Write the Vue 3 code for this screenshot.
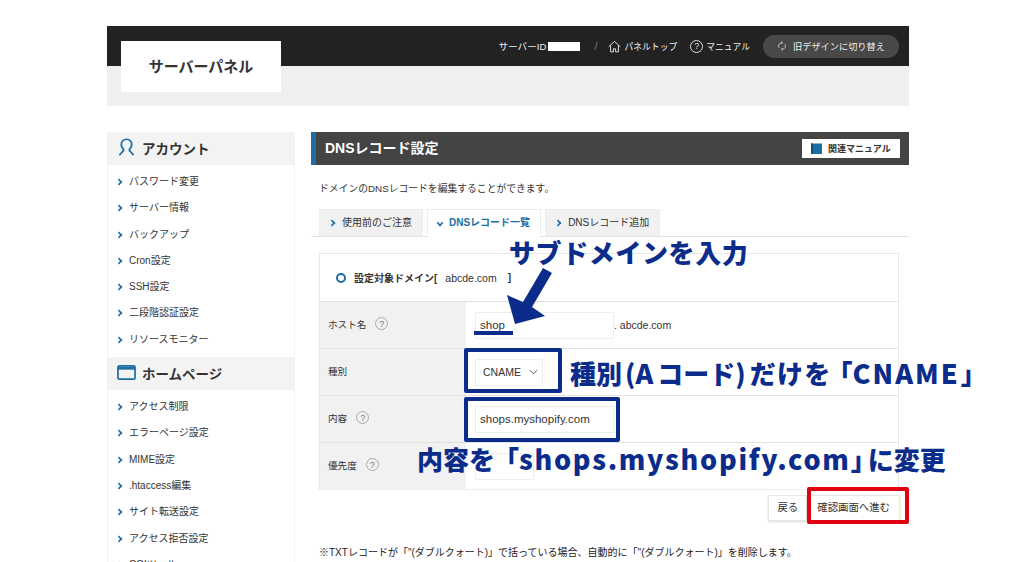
<template>
  <div class="page">
    <div class="wrap">
      <header class="header">
        <div class="topbar">
          <div class="logo">サーバーパネル</div>
          <div class="top-nav">
            <span class="server-id">サーバーID<i class="masked"></i></span>
            <span class="slash">/</span>
            <span class="nav-link">
              <svg class="ico home" viewBox="0 0 14 14"><path d="M.8 7.200 7 1.500l6.200 5.700M2.800 5.800v7h3V9.500h2.400v3.300h3v-7" /></svg>
              パネルトップ
            </span>
            <span class="nav-link">
              <span class="help dark">?</span>
              マニュアル
            </span>
            <span class="switch">
              <svg class="ico" viewBox="0 0 14 14"><path d="M3 9.500A4.500 4.500 0 0 1 7 2.500M11 4.500A4.500 4.500 0 0 1 7 11.500M6 1l2 1.500L6 4M8 10l-2 1.500L8 13" /></svg>
              旧デザインに切り替え
            </span>
          </div>
        </div>
        <div class="subbar"></div>
      </header>

      <div class="columns">
        <aside class="side">
          <section v-for="group in menu" :key="group.title">
            <h2 class="side-head">
              <svg v-if="group.icon === 'user'" class="side-ico" viewBox="0 0 20 20">
                <path d="M7.500 12.500C5 10.500 4.500 8.500 4.500 6.500a5.500 5.200 0 0 1 11 0c0 2-.5 4-3 6M7.500 12.500 2.500 18M12.500 12.500l5 5.500" />
              </svg>
              <svg v-else class="side-ico" viewBox="0 0 20 20">
                <rect x="1" y="3" width="18" height="14" rx="1.500" />
                <path class="band" d="M1 5.500h18" />
              </svg>
              {{ group.title }}
            </h2>
            <ul class="side-list">
              <li v-for="item in group.items" :key="item">{{ item }}</li>
            </ul>
          </section>
        </aside>

        <main class="main">
          <div class="title-bar">
            <h1>DNSレコード設定</h1>
            <span class="manual-btn"><i class="book"></i>関連マニュアル</span>
          </div>
          <p class="lead">ドメインのDNSレコードを編集することができます。</p>

          <div class="tabs">
            <span class="tab">使用前のご注意</span>
            <span class="tab active">DNSレコード一覧</span>
            <span class="tab">DNSレコード追加</span>
          </div>

          <div class="panel">
            <div class="domain"><i class="ring"></i><b>設定対象ドメイン[</b><span class="domain-name">abcde.com</span><b>]</b></div>
            <div class="row">
              <div class="label">ホスト名<span class="help">?</span></div>
              <div class="cell"><span class="field host">shop</span><span class="suffix">. abcde.com</span></div>
            </div>
            <div class="row">
              <div class="label">種別</div>
              <div class="cell">
                <span class="field select">CNAME
                  <svg class="chev" viewBox="0 0 10 6"><path d="M1 1l4 4 4-4" /></svg>
                </span>
              </div>
            </div>
            <div class="row">
              <div class="label">内容<span class="help">?</span></div>
              <div class="cell"><span class="field content">shops.myshopify.com</span></div>
            </div>
            <div class="row">
              <div class="label">優先度<span class="help">?</span></div>
              <div class="cell"><span class="field priority"></span></div>
            </div>
          </div>

          <div class="actions">
            <span class="btn back">戻る</span>
            <span class="btn">確認画面へ進む</span>
          </div>

          <p class="note">※TXTレコードが「"(ダブルクォート)」で括っている場合、自動的に「"(ダブルクォート)」を削除します。</p>
        </main>
      </div>
    </div>

    <!-- annotations drawn over the screenshot -->
    <div class="note-text t1">サブドメインを入力</div>
    <svg class="arrow" viewBox="0 0 60 70"><path d="M43 8 52 13 32 47 45 56 15 64 7 35 23 42Z" /></svg>
    <i class="underline"></i>
    <i class="box b1"></i>
    <i class="box b2"></i>
    <i class="box red"></i>
    <div class="note-text t2">種別<span class="paren-l">(</span><span class="latin a">A</span>コード<span class="paren-r">)</span><span class="spaced">だけを</span><span class="bracket o2">「</span><span class="latin">CNAME</span><span class="bracket c2">」</span></div>
    <div class="note-text t3">内容を<span class="bracket o3">「</span><span class="latin url">shops.myshopify.com</span><span class="bracket c3">」</span>に変更</div>
  </div>
</template>

<script setup>
const menu = [
  {
    title: 'アカウント',
    icon: 'user',
    items: ['パスワード変更', 'サーバー情報', 'バックアップ', 'Cron設定', 'SSH設定', '二段階認証設定', 'リソースモニター'],
  },
  {
    title: 'ホームページ',
    icon: 'window',
    items: ['アクセス制限', 'エラーページ設定', 'MIME設定', '.htaccess編集', 'サイト転送設定', 'アクセス拒否設定', 'CGIツール'],
  },
]
</script>

<style>
html,
body {
  margin: 0;
  background: #fff;
}
</style>

<style scoped>
.page {
  position: relative;
  width: 1024px;
  height: 562px;
  overflow: hidden;
  background: #fff;
  color: #333;
  font-family: "Liberation Sans", "Noto Sans CJK JP", sans-serif;
  font-size: 10px;
}
.wrap {
  width: 802px;
  margin-left: 107px;
  padding-top: 26px;
}

/* header */
.topbar {
  height: 40px;
  background: #222;
  display: flex;
  justify-content: space-between;
  padding: 0 10px 0 14px;
}
.subbar {
  height: 40px;
  background: #efefef;
}
.logo {
  width: 160px;
  height: 51px;
  margin-top: 15px;
  background: #fff;
  color: #333;
  font-size: 15px;
  font-weight: 700;
  line-height: 51px;
  text-align: center;
  position: relative;
  z-index: 1;
}
.top-nav {
  display: flex;
  align-items: center;
  color: #f0f0f0;
  font-size: 8.800px;
}
.server-id {
  display: flex;
  align-items: center;
  font-size: 9.600px;
}
.masked {
  width: 32px;
  height: 9px;
  margin-left: 2px;
  background: #fff;
}
.slash {
  margin: 0 11px 0 14px;
  color: #777;
  font-size: 11px;
}
.nav-link {
  display: flex;
  align-items: center;
  gap: 3px;
  margin-right: 13px;
}
.ico {
  width: 10px;
  height: 10px;
  fill: none;
  stroke: #eee;
  stroke-width: 1;
}
.ico.home {
  width: 13px;
  height: 13px;
}
.switch {
  width: 136px;
  height: 23px;
  border-radius: 12px;
  background: #484848;
  display: flex;
  align-items: center;
  justify-content: center;
  gap: 6px;
  font-size: 9.200px;
}
.help {
  display: inline-flex;
  align-items: center;
  justify-content: center;
  width: 13px;
  height: 13px;
  margin-left: 9px;
  border: 1px solid #aaa;
  border-radius: 50%;
  color: #777;
  font-size: 9px;
  box-sizing: border-box;
}
.help.dark {
  margin-left: 0;
  border-color: #ddd;
  color: #ddd;
}

.columns {
  display: flex;
  gap: 16px;
  margin-top: 26px;
}

/* sidebar */
.side {
  width: 188px;
  flex: none;
  border: solid #f3f3f3;
  border-width: 0 1px;
  box-sizing: border-box;
}
.side-head {
  height: 33px;
  margin: 0;
  padding: 0 0 2px 9px;
  display: flex;
  align-items: center;
  gap: 6px;
  background: #f3f3f3;
  color: #333;
  font-size: 13.500px;
  font-weight: 700;
  box-sizing: border-box;
}
.side-ico {
  width: 19px;
  height: 19px;
  fill: none;
  stroke: #1c6ea4;
  stroke-width: 1.800;
}
.side-ico .band {
  stroke-width: 3;
}
.side-list {
  list-style: none;
  margin: 0;
  padding: 4px 0;
}
.side-list li {
  position: relative;
  height: 26.300px;
  padding-left: 21px;
  font-size: 10px;
  line-height: 26.300px;
}
.side-list li::before {
  content: "";
  position: absolute;
  left: 8px;
  top: 10px;
  width: 4px;
  height: 4px;
  border: solid #246f9f;
  border-width: 2px 2px 0 0;
  transform: rotate(45deg) scale(0.8);
}

/* main */
.main {
  flex: 1;
  min-width: 0;
}
.title-bar {
  height: 33px;
  background: #444;
  border-left: 5px solid #1c6ea4;
  display: flex;
  align-items: center;
  justify-content: space-between;
  padding: 0 9px;
  box-sizing: border-box;
}
.title-bar h1 {
  margin: 0 0 3px;
  color: #fff;
  font-size: 14px;
  font-weight: 700;
}
.manual-btn {
  width: 98px;
  height: 19px;
  background: #fff;
  display: flex;
  align-items: center;
  gap: 6px;
  padding-left: 9px;
  box-sizing: border-box;
  color: #333;
  font-size: 9px;
  font-weight: 700;
}
.book {
  width: 11px;
  height: 11px;
  background: #1c6ea4;
  border-left: 2px solid #14507a;
  border-top: 1px solid #8fb6d0;
  box-sizing: border-box;
}
.lead {
  margin: 17px 0 0 8px;
  font-size: 9.800px;
  line-height: 14px;
}
.tabs {
  display: flex;
  gap: 4px;
  height: 27px;
  margin-top: 13px;
  padding-left: 8px;
  border-bottom: 1px solid #e4e4e4;
}
.tab {
  position: relative;
  padding: 0 10px 0 22px;
  background: #f1f1f1;
  border: 1px solid #ececec;
  border-bottom: 0;
  font-size: 10px;
  line-height: 26px;
}
.tab::before {
  content: "";
  position: absolute;
  left: 9px;
  top: 10px;
  width: 4px;
  height: 4px;
  border: solid #246f9f;
  border-width: 2px 2px 0 0;
  transform: rotate(45deg) scale(0.8);
}
.tab.active {
  height: 28px;
  padding: 0 10px 0 21px;
  background: #fff;
  color: #1c6ea4;
  font-weight: 700;
}
.tab.active::before {
  transform: rotate(135deg) scale(0.8);
}

.panel {
  width: 580px;
  margin: 16px 0 0 8px;
  border: 1px solid #e8e8e8;
  border-bottom-color: #eee;
  box-sizing: border-box;
}
.domain {
  height: 47px;
  display: flex;
  align-items: center;
  padding-left: 16px;
  font-size: 10px;
}
.domain b {
  font-weight: 700;
}
.domain-name {
  margin: 0 11px 0 8px;
  font-size: 10.500px;
}
.ring {
  width: 10px;
  height: 10px;
  margin-right: 8px;
  border: 2px solid #1c6ea4;
  border-radius: 50%;
  box-sizing: border-box;
}
.row {
  display: flex;
  height: 47px;
  border-top: 1px solid #e2e2e2;
  box-sizing: border-box;
}
.label {
  width: 146px;
  flex: none;
  display: flex;
  align-items: center;
  padding: 0 0 3px 8px;
  background: #f1f1f1;
  box-sizing: border-box;
  font-size: 9.600px;
}
.cell {
  flex: 1;
  display: flex;
  align-items: center;
  padding-left: 9px;
}
.field {
  display: flex;
  align-items: center;
  height: 27px;
  padding: 0 4px;
  border: 1px solid #eee;
  box-sizing: border-box;
  font-size: 11.500px;
}
.host,
.content {
  width: 139px;
}
.select {
  width: 68px;
  justify-content: space-between;
  padding: 0 4px 0 7px;
  font-size: 10.500px;
}
.chev {
  width: 9px;
  height: 6px;
  fill: none;
  stroke: #444;
  stroke-width: 1;
}
.priority {
  width: 59px;
}
.suffix {
  font-size: 10.500px;
}
.actions {
  display: flex;
  justify-content: flex-end;
  margin: 5px 9px 0 0;
}
.btn {
  height: 26px;
  padding: 0 9px;
  background: #fff;
  border: 1px solid #e6e6e6;
  box-shadow: 0 1px 2px rgba(0, 0, 0, 0.15);
  box-sizing: border-box;
  font-size: 10.400px;
  line-height: 24px;
}
.btn.back {
  padding: 0 8px;
}
.note {
  margin: 25px 0 0 8px;
  color: #222;
  font-size: 10px;
  line-height: 14px;
  white-space: nowrap;
}

/* annotations */
.note-text {
  position: absolute;
  color: #0c2c8c;
  font-family: "Noto Sans CJK JP", sans-serif;
  font-size: 26px;
  font-weight: 900;
  white-space: nowrap;
  line-height: 1;
}
.latin {
  font-size: 27px;
  letter-spacing: 2px;
}
.latin.a {
  margin-right: 2px;
}
.latin.url {
  letter-spacing: 1.700px;
}
.paren-l {
  margin-left: 3px;
}
.paren-r {
  margin-right: 4px;
}
.spaced {
  letter-spacing: 1.300px;
}
.bracket {
  font-feature-settings: "halt";
}
.o2 {
  margin-left: 8px;
}
.c2 {
  margin-left: 1px;
}
.o3 {
  margin-left: 11px;
}
.c3 {
  margin-right: 4px;
}
.t1 {
  left: 509px;
  top: 239px;
  letter-spacing: 0.600px;
}
.t2 {
  left: 570px;
  top: 359px;
}
.t3 {
  left: 417px;
  top: 445px;
}
.arrow {
  position: absolute;
  left: 500px;
  top: 260px;
  width: 60px;
  height: 70px;
  fill: #0c2c8c;
}
.underline {
  position: absolute;
  left: 474px;
  top: 331px;
  width: 39px;
  height: 4px;
  background: #0c2c8c;
}
.box {
  position: absolute;
  border: 4px solid #0c2c8c;
  border-radius: 2px;
  box-sizing: border-box;
}
.b1 {
  left: 464px;
  top: 348px;
  width: 98px;
  height: 45px;
}
.b2 {
  left: 464px;
  top: 397px;
  width: 156px;
  height: 45px;
}
.red {
  left: 807px;
  top: 487px;
  width: 102px;
  height: 37px;
  border-color: #e0000f;
}
</style>
